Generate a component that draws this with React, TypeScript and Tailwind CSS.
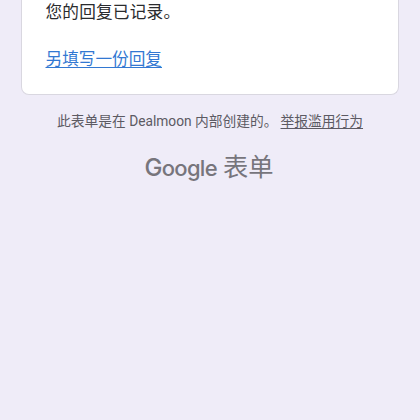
function ResponseCard() {
  return (
    <div className="mx-auto h-[95px] w-[378px] rounded-b-lg border border-t-0 border-[#d9d7e0] bg-white px-[23.5px] pt-px text-[16.65px] leading-6 text-[#2a2b2e]">
      <p className="tracking-[0.2px]">您的回复已记录。</p>
      <a
        href="#"
        className="mt-[23px] inline-block text-[#3278d2] underline decoration-1 underline-offset-[2px]"
      >
        另填写一份回复
      </a>
    </div>
  );
}

function Disclaimer() {
  return (
    <div className="mt-4 flex justify-center gap-[3px] text-[13.75px] leading-5 whitespace-nowrap text-[#5c5a63]">
      <span>此表单是在 Dealmoon 内部创建的。</span>
      <a href="#" className="underline decoration-1 underline-offset-[2px]">
        举报滥用行为
      </a>
    </div>
  );
}

function FormsLogo() {
  return (
    <div className="mt-[19px] flex h-9 items-center pl-[144.5px] leading-9 text-[#77757c]">
      <span className="inline-block w-[78.5px] font-['Inter'] text-[22px] font-[550] tracking-[-0.7px] first-letter:text-[24px]">
        Google
      </span>
      <span className="text-[25.3px]">表单</span>
    </div>
  );
}

export default function App() {
  return (
    <main className="h-screen overflow-hidden bg-[#efecf8] font-['Roboto','Noto_Sans_CJK_SC',sans-serif]">
      <ResponseCard />
      <Disclaimer />
      <FormsLogo />
    </main>
  );
}
